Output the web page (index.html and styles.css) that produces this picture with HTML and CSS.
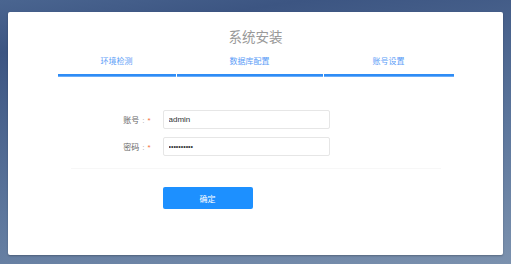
FILE: index.html
```html
<!DOCTYPE html>
<html lang="zh-CN">
<head>
    <meta charset="UTF-8">
    <meta name="viewport" content="width=device-width, initial-scale=1.0">
    <title>系统安装</title>
    <link rel="stylesheet" href="styles.css">
</head>
<body>
    <div class="panel">
        <h1 class="panel-title">系统安装</h1>
        <div class="steps">
            <div class="step">
                <div class="step-name">环境检测</div>
                <div class="step-bar"></div>
            </div>
            <div class="step">
                <div class="step-name">数据库配置</div>
                <div class="step-bar"></div>
            </div>
            <div class="step">
                <div class="step-name">账号设置</div>
                <div class="step-bar"></div>
            </div>
        </div>
        <form class="form">
            <div class="form-row">
                <label class="form-label">账号<span class="colon">:</span><span class="required">*</span></label>
                <input class="form-input" type="text" value="admin">
            </div>
            <div class="form-row">
                <label class="form-label">密码<span class="colon">:</span><span class="required">*</span></label>
                <input class="form-input form-password" type="password" value="1234567890">
            </div>
            <div class="form-divider"></div>
            <div class="form-actions">
                <button class="btn-primary" type="button">确定</button>
            </div>
        </form>
    </div>
</body>
</html>
```

FILE: styles.css
```css
body {
    margin: 0;
    height: 264px;
    overflow: hidden;
    font-family: "Liberation Sans", "Noto Sans CJK SC", sans-serif;
    background: linear-gradient(170deg, #4a6590 0%, #3c5582 15%, #5c769c 60%, #7b91ae 100%);
}
.panel {
    margin: 12px 8px 0;
    height: 243px;
    background-color: #fff;
    border-radius: 2px;
    box-shadow: 0 1px 2px rgba(0, 0, 0, 0.25);
    overflow: hidden;
}
.panel-title {
    margin: 0;
    padding-top: 17px;
    font-size: 13.5px;
    line-height: 18px;
    font-weight: normal;
    text-align: center;
    color: #999;
}
.steps {
    display: grid;
    grid-template-columns: 118px 146px 130px;
    column-gap: 1px;
    width: 396px;
    margin: 9px auto 0;
}
.step-name {
    font-size: 8px;
    line-height: 12px;
    text-align: center;
    color: #5b9cf7;
}
.step-bar {
    margin-top: 6px;
    height: 3px;
    background-color: #2f8cf5;
    box-shadow: inset 0 -1px 0 #69adfa;
}
.form {
    width: 370px;
    margin: 33px auto 0;
}
.form-row {
    display: flex;
    align-items: center;
    margin-bottom: 8px;
}
.form-label {
    width: 80px;
    padding-right: 12px;
    text-align: right;
    font-size: 8px;
    color: #666;
}
.colon {
    margin-left: 3px;
    color: #aaa;
}
.required {
    margin-left: 3px;
    color: #f4703f;
}
.form-input {
    box-sizing: border-box;
    width: 167px;
    height: 19px;
    padding: 0 5px;
    border: 1px solid #e6e6e6;
    border-radius: 2px;
    font-family: inherit;
    font-size: 8px;
    color: #333;
    outline: none;
}
.form-password {
    font-size: 7px;
}
.form-divider {
    height: 1px;
    margin-top: 12px;
    background-color: #f7f7f7;
}
.form-actions {
    padding: 18px 0 0 92px;
}
.btn-primary {
    width: 90px;
    height: 22px;
    border: none;
    border-radius: 2px;
    background-color: #1d90ff;
    color: #fff;
    font-family: inherit;
    font-size: 8px;
    cursor: pointer;
}
```
